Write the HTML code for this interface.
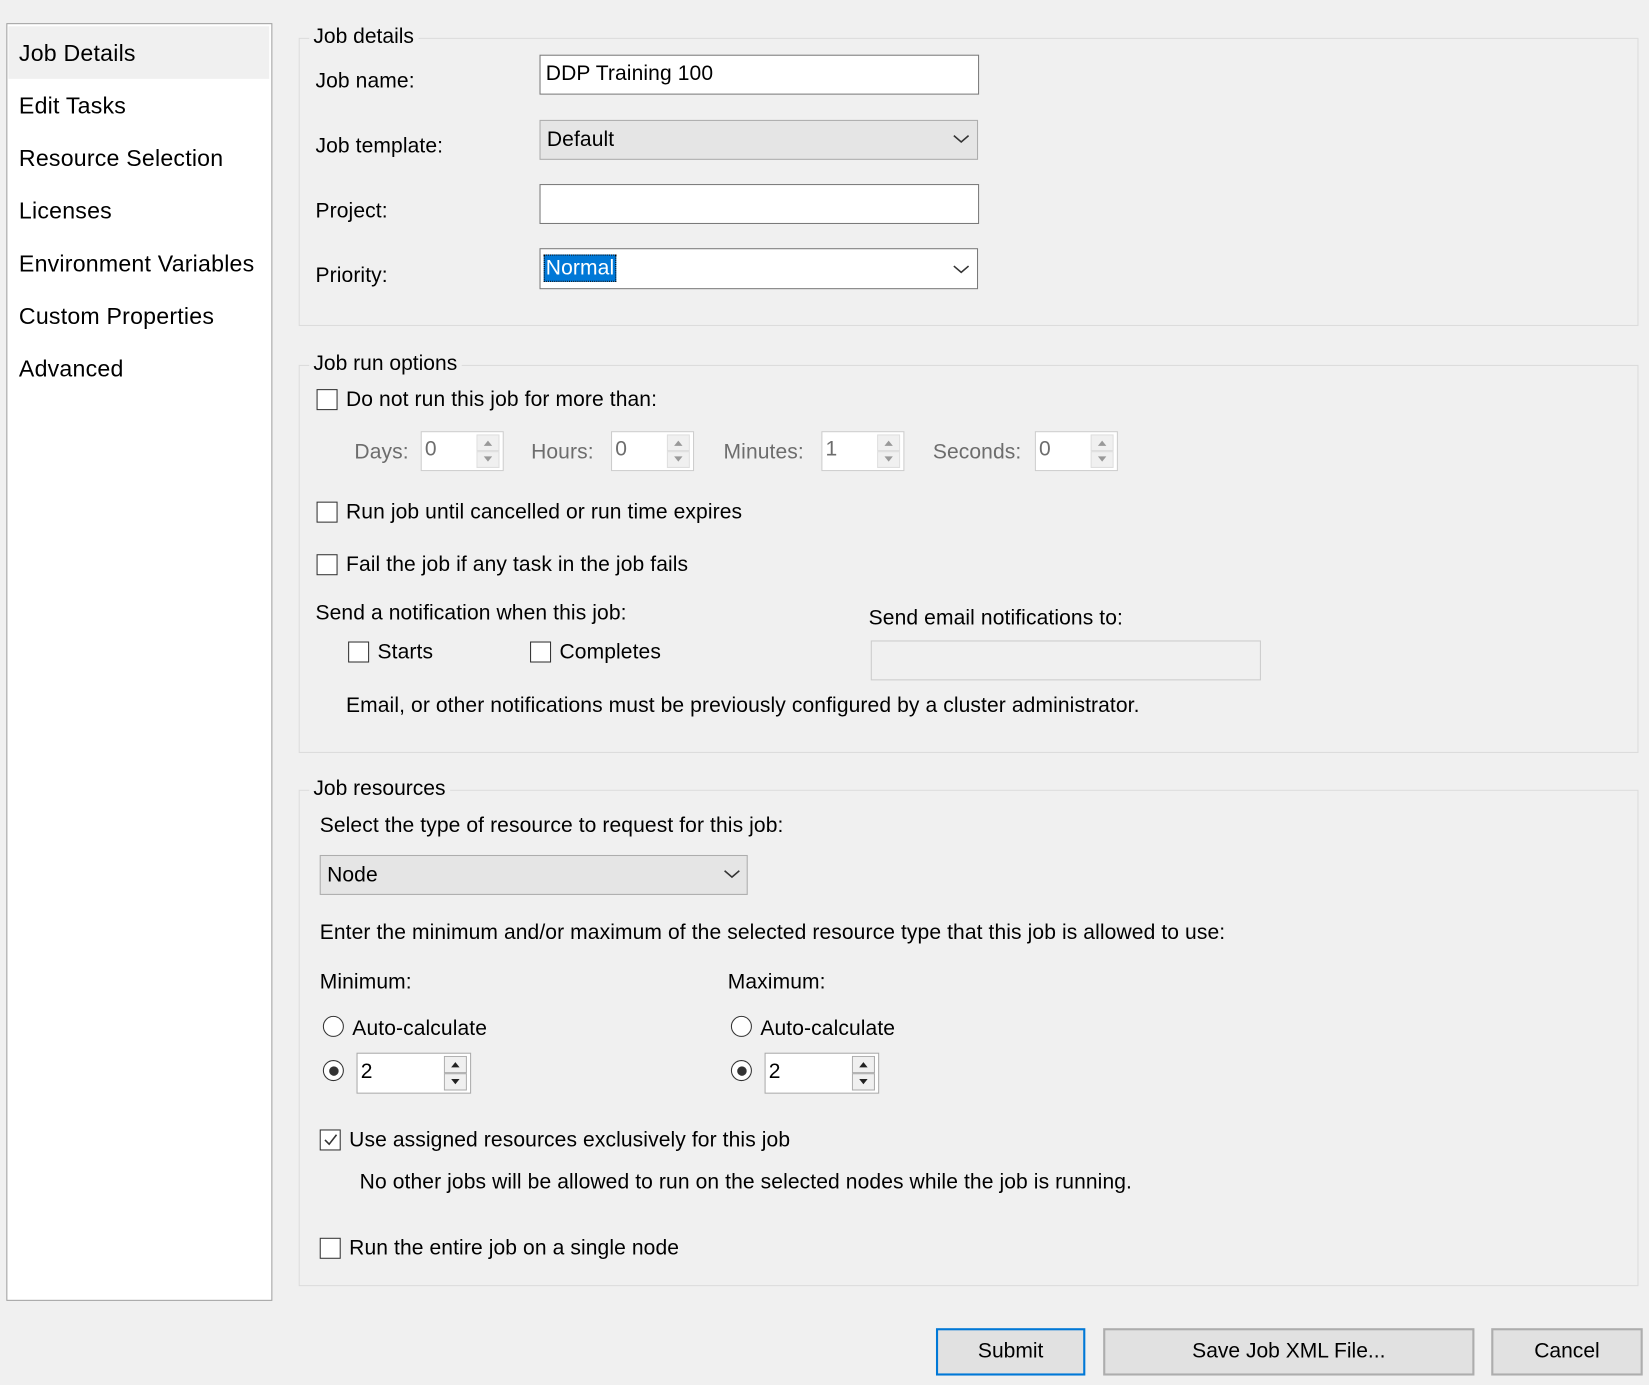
<!DOCTYPE html>
<html><head><style>
html,body{margin:0;padding:0;background:#f0f0f0;width:1649px;height:1385px;overflow:hidden}
#w{position:absolute;left:0;top:0;width:1568px;height:1317px;transform:scale(1.05166,1.05163);transform-origin:0 0;font-family:"Liberation Sans",sans-serif;color:#000}
#w div{position:absolute;box-sizing:border-box}
.t{font-size:20px;line-height:24px;white-space:nowrap;letter-spacing:0.1px}
.g{color:#6d6d6d}
.nav{font-size:22px;line-height:26px;left:18px;letter-spacing:0.2px}
.grp{border:1px solid #dcdcdc}
.leg{background:#f0f0f0;padding:0 4px;font-size:20px;line-height:22px}
.in{background:#fff;border:1px solid #7a7a7a}
.cb{width:20px;height:20px;border:1px solid #333;background:#fff}
.dd{background:#e5e5e5;border:1px solid #adadad}
.spin{background:#fff;border:1px solid #ccc}
.sp{width:22px}
.sp svg{display:block}
.rb{width:20px;height:20px;border:1.5px solid #333;border-radius:50%;background:#fff}
.btn{background:#e1e1e1;border:2px solid #adadad;font-size:20px;line-height:40px;text-align:center}
</style></head><body><div id="w">
<div style="left:6px;top:22px;width:253px;height:1215px;background:#fff;border:1px solid #a0a0a0"></div>
<div style="left:8px;top:25px;width:248px;height:50px;background:#f0f0f0"></div>
<div class="nav" style="top:38px">Job Details</div>
<div class="nav" style="top:88px">Edit Tasks</div>
<div class="nav" style="top:138px">Resource Selection</div>
<div class="nav" style="top:188px">Licenses</div>
<div class="nav" style="top:238px">Environment Variables</div>
<div class="nav" style="top:288px">Custom Properties</div>
<div class="nav" style="top:338px">Advanced</div>

<div class="grp" style="left:284px;top:36px;width:1274px;height:274px"></div>
<div class="leg" style="left:294px;top:24px">Job details</div>
<div class="t" style="left:300px;top:65px">Job name:</div>
<div class="in" style="left:513px;top:52px;width:418px;height:38px"></div>
<div class="t" style="left:519px;top:58px">DDP Training 100</div>
<div class="t" style="left:300px;top:127px">Job template:</div>
<div class="dd" style="left:513px;top:114px;width:417px;height:38px"></div>
<div class="t" style="left:520px;top:121px">Default</div>
<svg style="position:absolute;left:906px;top:127px" width="16" height="10"><path d="M1 2 L8 8 L15 2" fill="none" stroke="#333" stroke-width="1.5"/></svg>
<div class="t" style="left:300px;top:189px">Project:</div>
<div class="in" style="left:513px;top:175px;width:418px;height:38px"></div>
<div class="t" style="left:300px;top:250px">Priority:</div>
<div class="in" style="left:513px;top:236px;width:417px;height:39px"></div>
<div class="t" style="left:517px;top:242px;background:#0078d7;color:#fff;padding:0 1px;border:1px dotted #000">Normal</div>
<svg style="position:absolute;left:906px;top:251px" width="16" height="10"><path d="M1 2 L8 8 L15 2" fill="none" stroke="#333" stroke-width="1.5"/></svg>

<div class="grp" style="left:284px;top:347px;width:1274px;height:369px"></div>
<div class="leg" style="left:294px;top:335px">Job run options</div>
<div class="cb" style="left:301px;top:370px"></div>
<div class="t" style="left:329px;top:368px">Do not run this job for more than:</div>
<div class="t g" style="left:337px;top:418px">Days:</div>
<div class="spin" style="left:400px;top:410px;width:79px;height:38px"></div><div class="t g" style="left:404px;top:415px">0</div>
<div class="sp" style="left:453px;top:413px"><svg width="22" height="32"><rect x="0.5" y="0.5" width="21" height="15" fill="#f0f0f0" stroke="#ddd"/><rect x="0.5" y="16.5" width="21" height="15" fill="#f0f0f0" stroke="#ddd"/><path d="M7 11 L11 6 L15 11Z M7 21 L11 26 L15 21Z" fill="#999"/></svg></div>
<div class="t g" style="left:505px;top:418px">Hours:</div>
<div class="spin" style="left:581px;top:410px;width:79px;height:38px"></div><div class="t g" style="left:585px;top:415px">0</div>
<div class="sp" style="left:634px;top:413px"><svg width="22" height="32"><rect x="0.5" y="0.5" width="21" height="15" fill="#f0f0f0" stroke="#ddd"/><rect x="0.5" y="16.5" width="21" height="15" fill="#f0f0f0" stroke="#ddd"/><path d="M7 11 L11 6 L15 11Z M7 21 L11 26 L15 21Z" fill="#999"/></svg></div>
<div class="t g" style="left:688px;top:418px">Minutes:</div>
<div class="spin" style="left:781px;top:410px;width:79px;height:38px"></div><div class="t g" style="left:785px;top:415px">1</div>
<div class="sp" style="left:834px;top:413px"><svg width="22" height="32"><rect x="0.5" y="0.5" width="21" height="15" fill="#f0f0f0" stroke="#ddd"/><rect x="0.5" y="16.5" width="21" height="15" fill="#f0f0f0" stroke="#ddd"/><path d="M7 11 L11 6 L15 11Z M7 21 L11 26 L15 21Z" fill="#999"/></svg></div>
<div class="t g" style="left:887px;top:418px">Seconds:</div>
<div class="spin" style="left:984px;top:410px;width:79px;height:38px"></div><div class="t g" style="left:988px;top:415px">0</div>
<div class="sp" style="left:1037px;top:413px"><svg width="22" height="32"><rect x="0.5" y="0.5" width="21" height="15" fill="#f0f0f0" stroke="#ddd"/><rect x="0.5" y="16.5" width="21" height="15" fill="#f0f0f0" stroke="#ddd"/><path d="M7 11 L11 6 L15 11Z M7 21 L11 26 L15 21Z" fill="#999"/></svg></div>
<div class="cb" style="left:301px;top:477px"></div>
<div class="t" style="left:329px;top:475px">Run job until cancelled or run time expires</div>
<div class="cb" style="left:301px;top:527px"></div>
<div class="t" style="left:329px;top:525px">Fail the job if any task in the job fails</div>
<div class="t" style="left:300px;top:571px">Send a notification when this job:</div>
<div class="t" style="left:826px;top:576px">Send email notifications to:</div>
<div class="cb" style="left:331px;top:610px"></div>
<div class="t" style="left:359px;top:608px">Starts</div>
<div class="cb" style="left:504px;top:610px"></div>
<div class="t" style="left:532px;top:608px">Completes</div>
<div style="left:828px;top:609px;width:371px;height:38px;border:1px solid #ccc;background:#f0f0f0"></div>
<div class="t" style="left:329px;top:659px">Email, or other notifications must be previously configured by a cluster administrator.</div>

<div class="grp" style="left:284px;top:751px;width:1274px;height:472px"></div>
<div class="leg" style="left:294px;top:739px">Job resources</div>
<div class="t" style="left:304px;top:773px">Select the type of resource to request for this job:</div>
<div class="dd" style="left:304px;top:813px;width:407px;height:38px"></div>
<div class="t" style="left:311px;top:820px">Node</div>
<svg style="position:absolute;left:688px;top:826px" width="16" height="10"><path d="M1 2 L8 8 L15 2" fill="none" stroke="#333" stroke-width="1.5"/></svg>
<div class="t" style="left:304px;top:875px">Enter the minimum and/or maximum of the selected resource type that this job is allowed to use:</div>
<div class="t" style="left:304px;top:922px">Minimum:</div>
<div class="t" style="left:692px;top:922px">Maximum:</div>
<div class="rb" style="left:307px;top:966px"></div>
<div class="t" style="left:335px;top:966px">Auto-calculate</div>
<div class="rb" style="left:695px;top:966px"></div>
<div class="t" style="left:723px;top:966px">Auto-calculate</div>
<div class="rb" style="left:307px;top:1008px"></div><div style="left:313px;top:1014px;width:9px;height:9px;border-radius:50%;background:#333"></div>
<div class="spin" style="left:339px;top:1001px;width:109px;height:39px;border-color:#aaa"></div><div class="t" style="left:343px;top:1007px">2</div>
<div class="sp" style="left:422px;top:1004px"><svg width="22" height="33"><rect x="0.5" y="0.5" width="21" height="15.5" fill="#f0f0f0" stroke="#aaa"/><rect x="0.5" y="17" width="21" height="15.5" fill="#f0f0f0" stroke="#aaa"/><path d="M7 11 L11 6 L15 11Z M7 22 L11 27 L15 22Z" fill="#222"/></svg></div>
<div class="rb" style="left:695px;top:1008px"></div><div style="left:701px;top:1014px;width:9px;height:9px;border-radius:50%;background:#333"></div>
<div class="spin" style="left:727px;top:1001px;width:109px;height:39px;border-color:#aaa"></div><div class="t" style="left:731px;top:1007px">2</div>
<div class="sp" style="left:810px;top:1004px"><svg width="22" height="33"><rect x="0.5" y="0.5" width="21" height="15.5" fill="#f0f0f0" stroke="#aaa"/><rect x="0.5" y="17" width="21" height="15.5" fill="#f0f0f0" stroke="#aaa"/><path d="M7 11 L11 6 L15 11Z M7 22 L11 27 L15 22Z" fill="#222"/></svg></div>
<div class="cb" style="left:304px;top:1074px"></div>
<svg style="position:absolute;left:306px;top:1076px" width="16" height="16"><path d="M3 8 L7 12 L14 3" fill="none" stroke="#333" stroke-width="1.5"/></svg>
<div class="t" style="left:332px;top:1072px">Use assigned resources exclusively for this job</div>
<div class="t" style="left:342px;top:1112px">No other jobs will be allowed to run on the selected nodes while the job is running.</div>
<div class="cb" style="left:304px;top:1177px"></div>
<div class="t" style="left:332px;top:1175px">Run the entire job on a single node</div>

<div class="btn" style="left:890px;top:1263px;width:142px;height:45px;border-color:#0078d7">Submit</div>
<div class="btn" style="left:1049px;top:1263px;width:353px;height:45px">Save Job XML File...</div>
<div class="btn" style="left:1418px;top:1263px;width:144px;height:45px">Cancel</div>
</div></body></html>
